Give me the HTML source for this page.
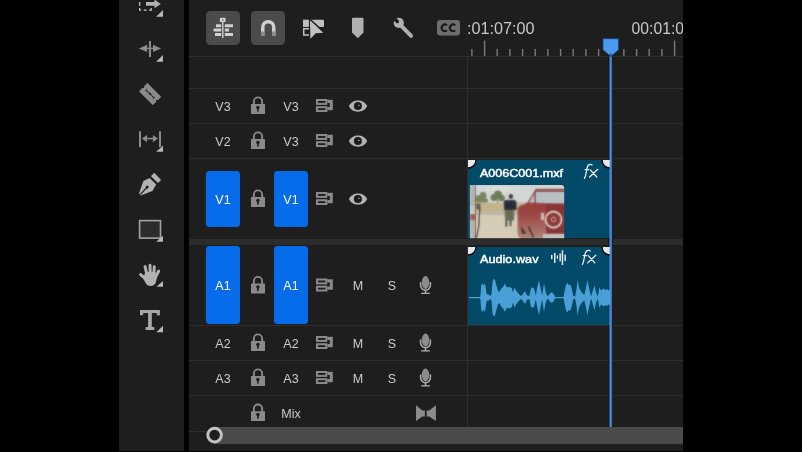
<!DOCTYPE html>
<html><head><meta charset="utf-8">
<style>
*{margin:0;padding:0;box-sizing:border-box}
html,body{width:802px;height:452px;overflow:hidden;background:#000;font-family:"Liberation Sans",sans-serif}
.a{position:absolute}
svg{position:absolute;left:0;top:0;will-change:transform}
text{font-family:"Liberation Sans",sans-serif}
</style></head><body>
<svg width="802" height="452" viewBox="0 0 802 452">
<defs>
  <linearGradient id="carg" x1="0" y1="204" x2="0" y2="238" gradientUnits="userSpaceOnUse"><stop offset="0" stop-color="#983e3c"/><stop offset="0.4" stop-color="#9e4c48"/><stop offset="1" stop-color="#ae8478"/></linearGradient>
  <linearGradient id="phg" x1="609.6" y1="0" x2="612" y2="0" gradientUnits="userSpaceOnUse"><stop offset="0" stop-color="#5aa0e8"/><stop offset="1" stop-color="#2a6cc0"/></linearGradient>
  <filter id="blur" x="-5%" y="-5%" width="110%" height="110%"><feGaussianBlur in="SourceGraphic" stdDeviation="0.8" result="b"/><feComposite in="SourceGraphic" in2="b" operator="arithmetic" k1="0" k2="0.45" k3="0.55" k4="0"/></filter>
  <clipPath id="tlc"><rect x="189" y="0" width="494" height="451"/></clipPath>
  <clipPath id="vclip"><rect x="468" y="160" width="142" height="78"/></clipPath>
  <clipPath id="aclip"><rect x="468" y="247" width="142" height="78"/></clipPath>
  <clipPath id="thumb"><path d="M469.9,185 H561.2 Q564.2,185 564.2,188 V238.2 H469.9 Z"/></clipPath>
  <pattern id="hatch" width="2.2" height="2.2" patternUnits="userSpaceOnUse" patternTransform="rotate(45)"><rect width="2.2" height="2.2" fill="#252525"/><rect width="1.1" height="2.2" fill="#323232"/></pattern>
  <g id="lock">
    <path d="M253.85,-0.5 V-4 A4.15,4.15 0 0 1 262.15,-4 V-0.5" fill="none" stroke="#8a8a8a" stroke-width="1.9"/>
    <rect x="251" y="-1.4" width="14" height="9.9" rx="0.6" fill="#8a8a8a"/>
    <circle cx="257.9" cy="1.9" r="1.7" fill="#1c1c1c"/>
    <rect x="257.1" y="2" width="1.6" height="4.1" fill="#1c1c1c"/>
  </g>
  <g id="sync">
    <rect x="317" y="-5.5" width="9.4" height="3.9" fill="none" stroke="#8a8a8a" stroke-width="2"/>
    <rect x="317" y="1.7" width="9.4" height="3.8" fill="none" stroke="#8a8a8a" stroke-width="2"/>
    <rect x="327.4" y="-5.7" width="5.4" height="10.4" fill="#8a8a8a"/>
    <rect x="327.3" y="-2.5" width="2.5" height="4" fill="#1c1c1c"/>
  </g>
  <g id="eye">
    <path d="M348.9,0.6 C352,-7 364,-7 367.2,0.6 C364,8.2 352,8.2 348.9,0.6 Z" fill="#b2b2b2"/>
    <circle cx="357.9" cy="0.5" r="4" fill="#1c1c1c"/>
    <rect x="358" y="-0.6" width="1.6" height="1" fill="#b2b2b2"/>
  </g>
  <g id="mic">
    <ellipse cx="425.5" cy="-2.5" rx="3.75" ry="6.5" fill="#8c8c8c"/>
    <path d="M420.6,-3 V0 A4.9,5.3 0 0 0 430.4,0 V-3" fill="none" stroke="#b0b0b0" stroke-width="1.5"/>
    <rect x="424.8" y="5" width="1.4" height="3.5" fill="#b0b0b0"/>
    <rect x="421.2" y="7.7" width="8.6" height="1.3" fill="#b0b0b0"/>
  </g>
  <g id="handle"><circle r="8" fill="#e6e8ec" stroke="#050505" stroke-width="1.4"/></g>
</defs>

<!-- left tools panel -->
<rect x="119" y="0" width="65" height="451" fill="#1e1e1e"/>
<!-- track select -->
<g fill="#c4c4c4">
  <rect x="139" y="2" width="1.3" height="3.8"/>
  <path d="M139,8 H140.3 V9.5 H141.2 V10.8 H139 Z"/>
  <rect x="143.7" y="9.5" width="2.9" height="1.3"/>
  <path d="M149,9.5 H150.6 V8 H151.9 V10.8 H149 Z"/>
</g>
<path d="M146,2 H154.5 V-0.5 L160.8,4 L154.5,8.2 V5.8 H146 Z" fill="#b4b4b4"/>
<path d="M156.1,16.8 H163 V10 Z" fill="#b8b8b8"/>
<!-- ripple -->
<g fill="#8c8c8c">
  <rect x="149" y="41" width="2" height="16"/>
  <path d="M138.8,48.4 L147.2,44.7 V52.1 Z"/>
  <path d="M161.1,48.4 L153,44.7 V52.1 Z"/>
  <rect x="146" y="47.7" width="8" height="1.4"/>
</g>
<path d="M156.1,61.7 H163 V54.9 Z" fill="#b8b8b8"/>
<!-- razor -->
<g transform="rotate(45 150.1 94.05)">
  <path d="M140.8,88.15 H159.4 Q159.9,88.15 159.9,88.65 V93 A1.05,1.05 0 0 0 159.9,95.1 V99.45 Q159.9,99.95 159.4,99.95 H140.8 Q140.3,99.95 140.3,99.45 V95.1 A1.05,1.05 0 0 0 140.3,93 V88.65 Q140.3,88.15 140.8,88.15 Z" fill="#8a8a8a"/>
  <rect x="144.5" y="93.6" width="11.2" height="0.9" fill="#1c1c1c"/>
  <path d="M143.8,92.3 L145.6,94.05 L143.8,95.8 L144.4,94.05 Z M156.4,92.3 L154.6,94.05 L156.4,95.8 L155.8,94.05 Z" fill="#1c1c1c"/>
  <path d="M150.1,92.7 L151.3,94.05 L150.1,95.4 L148.9,94.05 Z" fill="#1c1c1c"/>
</g>
<!-- slip -->
<g fill="#8c8c8c">
  <rect x="139" y="131.3" width="2" height="15.8"/>
  <rect x="159" y="131.3" width="2" height="15.8"/>
  <path d="M141.9,138.5 L147,135 V142.3 Z"/>
  <path d="M158,138.5 L152.9,135 V142.3 Z"/>
  <rect x="146" y="137.8" width="8" height="1.5"/>
</g>
<path d="M156.1,151.7 H163 V145.8 Z" fill="#b8b8b8"/>
<!-- pen -->
<g fill="#b2b2b2">
  <path d="M154.3,172.8 L161.1,179.9 L158,183.1 L150.9,176.2 Z"/>
  <path d="M149.6,177.9 L156.2,184.6 L152.4,191.1 L140.8,195.6 L139.1,193.2 L143.4,180.9 Z"/>
</g>
<path d="M140.5,194.4 L146.6,187.6" stroke="#1c1c1c" stroke-width="1.3"/>
<circle cx="147.1" cy="187.1" r="1.5" fill="#1c1c1c"/>
<!-- rectangle -->
<rect x="139.6" y="220.6" width="20.9" height="17.5" fill="url(#hatch)" stroke="#a4a4a4" stroke-width="1.6"/>
<path d="M156.1,241.7 H163 V235.8 Z" fill="#b8b8b8"/>
<!-- hand -->
<g stroke="#b2b2b2" stroke-width="3" stroke-linecap="round" fill="none">
  <path d="M140.6,274.6 L146.5,279.5"/>
  <path d="M145.1,266.6 L147,275"/>
  <path d="M150,265.3 L150.3,274"/>
  <path d="M154.3,266.7 L153.8,274"/>
  <path d="M158.7,271 L155.4,277.5"/>
</g>
<path d="M145.3,272 L155.3,272 L157,277 L156,282 Q154.5,286 150.8,286 Q147,286 145.6,283 L143.2,278.4 Z" fill="#b2b2b2"/>
<path d="M156.4,286.7 H163 V281.1 Z" fill="#b8b8b8"/>
<!-- type -->
<path d="M140,310 H159.9 V315.3 H156.8 V312.9 H151.8 V327 H154.3 V329.9 H145.6 V327 H148.1 V312.9 H143.2 V315.3 H140 Z" fill="#a8a8a8"/>
<path d="M156.3,332.3 H163 V325.8 Z" fill="#b8b8b8"/>

<!-- timeline panel -->
<g clip-path="url(#tlc)">
<rect x="189" y="0" width="494" height="451" fill="#1e1e1e"/>
<!-- toolbar -->
<rect x="206" y="11" width="34" height="34" rx="4.5" fill="#4b4b4b"/>
<rect x="251" y="11" width="34" height="34" rx="4.5" fill="#4b4b4b"/>
<g fill="#d2d2d2">
  <rect x="219.9" y="17.8" width="5.6" height="4.2"/><rect x="222" y="19.2" width="1.4" height="1.6" fill="#6a6a6a"/>
  <rect x="222.1" y="21.5" width="1.4" height="16.5"/>
  <rect x="216" y="24.3" width="5.2" height="2.9"/>
  <rect x="224.8" y="24.3" width="8.2" height="2.9"/>
  <path d="M214.3,28.5 H221.2 V31.5 H214.3 L213,30 Z"/>
  <rect x="224.8" y="28.5" width="4.2" height="3"/>
  <rect x="215" y="33" width="6.2" height="3"/>
  <rect x="224.8" y="33" width="8.2" height="3"/>
</g>
<path d="M262.75,35.5 V27.2 A5.5,5.5 0 0 1 273.75,27.2 V35.5" fill="none" stroke="#d0d0d0" stroke-width="3.5"/>
<rect x="261" y="31.5" width="3.5" height="4" fill="#8c8c8c"/>
<rect x="272" y="31.5" width="3.5" height="4" fill="#8c8c8c"/>
<!-- pointer icon -->
<g fill="#c0c0c0">
  <rect x="303" y="19.7" width="5.9" height="7.2"/>
  <path d="M310,19.7 H323 Q324,19.7 324,20.7 V25.9 Q324,26.9 323,26.9 H310 Z"/>
  <path d="M309,28.1 H303 V35.8 H309 V34.3 H304.5 V29.6 H309 Z"/>
</g>
<path d="M310.2,19.6 L320.6,29.2" stroke="#1e1e1e" stroke-width="1.6"/>
<path d="M310,20.6 L323.3,32.7 L315.8,33.3 L310.4,38.7 Z" fill="#c0c0c0"/>
<!-- marker -->
<path d="M352,18.8 Q352,17.8 353,17.8 H362.5 Q363.5,17.8 363.5,18.8 V32.5 L357.8,38.2 L352,32.5 Z" fill="#b0b0b0"/>
<!-- wrench -->
<path d="M401.3,25.8 L411.1,35.9" stroke="#b0b0b0" stroke-width="3.9" stroke-linecap="round"/>
<circle cx="398.8" cy="22.9" r="5.1" fill="#b0b0b0"/>
<path d="M392,16.1 L397.3,21.4" stroke="#1e1e1e" stroke-width="3.5" stroke-linecap="round"/>
<!-- CC -->
<rect x="437" y="20" width="23" height="15.5" rx="3.2" fill="#6e6e6e"/>
<path d="M446.9,25.4 A3,3.4 0 1 0 446.9,30.2 M455.1,25.4 A3,3.4 0 1 0 455.1,30.2" fill="none" stroke="#1c1c1c" stroke-width="2.3"/>
<!-- timecode -->
<text x="467" y="34" font-size="16" fill="#c8c8c8" textLength="67.5" lengthAdjust="spacingAndGlyphs">:01:07:00</text>
<text x="631.6" y="34" font-size="16" fill="#c8c8c8" textLength="83" lengthAdjust="spacingAndGlyphs">00:01:08:00</text>
<!-- ruler -->
<g fill="#7a7a7a"><rect x="471.2" y="49" width="1.4" height="7"/><rect x="483.9" y="40.5" width="1.4" height="15.5"/><rect x="496.5" y="49" width="1.4" height="7"/><rect x="509.2" y="49" width="1.4" height="7"/><rect x="521.9" y="49" width="1.4" height="7"/><rect x="534.5" y="49" width="1.4" height="7"/><rect x="547.2" y="49" width="1.4" height="7"/><rect x="559.9" y="49" width="1.4" height="7"/><rect x="572.5" y="49" width="1.4" height="7"/><rect x="585.2" y="49" width="1.4" height="7"/><rect x="597.9" y="49" width="1.4" height="7"/><rect x="610.5" y="49" width="1.4" height="7"/><rect x="623.2" y="49" width="1.4" height="7"/><rect x="635.9" y="49" width="1.4" height="7"/><rect x="648.5" y="49" width="1.4" height="7"/><rect x="661.2" y="49" width="1.4" height="7"/><rect x="673.9" y="40.5" width="1.4" height="15.5"/></g>
<!-- grid lines -->
<g fill="#2e2e2e">
  <rect x="189" y="56" width="494" height="1"/>
  <rect x="189" y="88" width="494" height="1"/>
  <rect x="189" y="123" width="494" height="1"/>
  <rect x="189" y="158" width="494" height="1"/>
  <rect x="189" y="325" width="494" height="1"/>
  <rect x="189" y="360" width="494" height="1"/>
  <rect x="189" y="395" width="494" height="1"/>
  <rect x="189" y="431" width="18" height="1"/>
  <rect x="467" y="57" width="1" height="370"/>
</g>
<rect x="189" y="239" width="494" height="6" fill="#2c2c2c"/>

<!-- track headers -->
<g font-size="12.5" fill="#cccccc" text-anchor="middle">
  <text x="223" y="111">V3</text><text x="291" y="111">V3</text>
  <text x="223" y="146">V2</text><text x="291" y="146">V3</text>
  <text x="223" y="348">A2</text><text x="291" y="348">A2</text>
  <text x="223" y="383">A3</text><text x="291" y="383">A3</text>
  <text x="291" y="418">Mix</text>
  <text x="358" y="290">M</text><text x="392" y="290">S</text>
  <text x="358" y="348">M</text><text x="392" y="348">S</text>
  <text x="358" y="383">M</text><text x="392" y="383">S</text>
</g>
<rect x="206" y="171" width="34" height="56" rx="3.5" fill="#076cea"/>
<rect x="274" y="171" width="34" height="56" rx="3.5" fill="#076cea"/>
<rect x="206" y="246" width="34" height="78" rx="3.5" fill="#076cea"/>
<rect x="274" y="246" width="34" height="78" rx="3.5" fill="#076cea"/>
<g font-size="12.5" fill="#ffffff" text-anchor="middle">
  <text x="223" y="204">V1</text><text x="291" y="204">V1</text>
  <text x="223" y="290">A1</text><text x="291" y="290">A1</text>
</g>
<use href="#lock" transform="translate(0 105.5)"/>
<use href="#lock" transform="translate(0 140.5)"/>
<use href="#lock" transform="translate(0 198.5)"/>
<use href="#lock" transform="translate(0 285)"/>
<use href="#lock" transform="translate(0 342.5)"/>
<use href="#lock" transform="translate(0 377.5)"/>
<use href="#lock" transform="translate(0 412.6)"/>
<use href="#sync" transform="translate(0 105.5)"/>
<use href="#sync" transform="translate(0 140.5)"/>
<use href="#sync" transform="translate(0 198.5)"/>
<use href="#sync" transform="translate(0 285)"/>
<use href="#sync" transform="translate(0 342.5)"/>
<use href="#sync" transform="translate(0 377.5)"/>
<use href="#eye" transform="translate(0 105.5)"/>
<use href="#eye" transform="translate(0 140.5)"/>
<use href="#eye" transform="translate(0 198.5)"/>
<use href="#mic" transform="translate(0 285)"/>
<use href="#mic" transform="translate(0 342.5)"/>
<use href="#mic" transform="translate(0 377.5)"/>
<path d="M416,405.2 L422.4,410.6 H424.9 V416.4 H422.4 L416,421 Z M435.9,405.2 L429.2,410.6 H426.7 V416.4 H429.2 L435.9,421 Z" fill="#8c8c8c"/>

<rect x="608" y="50" width="1.6" height="377" fill="#171b22"/><rect x="612" y="50" width="1.4" height="377" fill="#251f1c"/>
<!-- video clip -->
<rect x="468" y="160" width="142" height="78" fill="#024a67"/>
<g clip-path="url(#thumb)"><g filter="url(#blur)">
  <rect x="468" y="184" width="98" height="56" fill="#d2cbb8"/>
  <rect x="468" y="184" width="98" height="20" fill="#d3d6d6"/>
  <ellipse cx="500" cy="189" rx="14" ry="3" fill="#dcdcd8"/>
  <g fill="#78865e"><ellipse cx="479" cy="199" rx="3.6" ry="4"/><ellipse cx="483" cy="196" rx="3.4" ry="4.2"/><ellipse cx="485" cy="200.5" rx="3" ry="2.6"/><rect x="481.5" y="200" width="1" height="4"/></g>
  <g fill="#6a7c52"><ellipse cx="494" cy="197.5" rx="3.5" ry="3.6"/><ellipse cx="498" cy="194.5" rx="4" ry="4"/><ellipse cx="501.5" cy="198" rx="3.4" ry="3.2"/><rect x="497" y="199" width="1.2" height="4"/></g>
  <rect x="468" y="202.5" width="98" height="9.5" fill="#c3b38f"/>
  <rect x="468" y="212" width="98" height="3" fill="#bdb6a8"/>
  <rect x="468" y="215" width="98" height="25" fill="#d6cbb6"/>
  <rect x="469.9" y="185" width="5.2" height="54" fill="#b6b2ae"/>
  <rect x="469.9" y="206" width="5.2" height="8" fill="#c8c6c2"/>
  <rect x="469.9" y="214" width="5.2" height="6.2" fill="#a85a58"/>
  <rect x="475" y="185" width="0.9" height="54" fill="#5a5552"/>
  <rect x="476.5" y="203.5" width="4" height="6" fill="#5e5a56"/>
  <path d="M479.8,208.5 L478.8,226 L476.4,238" stroke="#2a2624" stroke-width="1.2" fill="none"/>
  <circle cx="510.9" cy="196.4" r="2.3" fill="#2e2a26"/>
  <path d="M503.6,201.5 Q504,200 507,199.8 H514 Q516.5,200 516.6,202 L516.8,210 H504 Z" fill="#262c38"/>
  <path d="M504.5,210 H514.5 L514,220.5 H505 Z" fill="#6c6a52"/>
  <rect x="505.2" y="220" width="2.2" height="7" fill="#57574a"/>
  <rect x="509.4" y="220" width="2.2" height="6.2" fill="#57574a"/>
  <path d="M517.5,210 Q517.5,205 524,204.5 L527.6,202 L535.8,188.7 H566 V240 H522 Q517.5,238 517.5,232 Z" fill="url(#carg)"/>
  <path d="M529,202.5 L536.6,190.3 H566 V203.5 Z" fill="#b8c0c4"/>
  <path d="M536.6,190.3 H566 V192 H536 Z" fill="#8e4444"/>
  <rect x="534.3" y="190.5" width="1.6" height="13" fill="#8e4444"/>
  <rect x="546" y="203.8" width="20" height="30.5" fill="#8c3030"/>
  <circle cx="553.5" cy="219.6" r="8" fill="none" stroke="#ddd4ce" stroke-width="1.6"/>
  <circle cx="553.5" cy="219.6" r="2.4" fill="none" stroke="#c2aaa2" stroke-width="1"/>
  <path d="M520.7,225.8 L526.5,233.5 L522,234 Z" fill="#3a3030"/>
  <path d="M528.4,226.5 L533.5,237.3" stroke="#3a2626" stroke-width="1.6"/>
  <rect x="543" y="234" width="23" height="5" fill="#c4c0bc"/>
  <rect x="541" y="213" width="3" height="7" fill="#c9b8b0"/>
</g></g>
<text x="480" y="177.3" font-size="11.8" fill="#ffffff" stroke="#ffffff" stroke-width="0.45" textLength="83"  lengthAdjust="spacingAndGlyphs">A006C001.mxf</text>
<g id="fxv" stroke="#eef2f4" stroke-width="1.25" fill="none" stroke-linecap="round">
  <path d="M584.4,178.4 Q585.6,176.5 586.2,172.5 L587.2,167.4 Q588,164.4 590.4,164.4 Q591.6,164.4 592.2,164.9"/>
  <path d="M585.2,169.7 H588.7"/>
  <path d="M590.3,169.8 L596.8,177 M597.8,169.3 L589.6,177"/>
</g>
<g clip-path="url(#vclip)">
  <use href="#handle" transform="translate(468 160)"/>
  <use href="#handle" transform="translate(610 160)"/>
</g>

<!-- audio clip -->
<rect x="468" y="247" width="142" height="78" fill="#024a67"/>
<path d="M469.0,297.0 L479.9,297.0 L480.4,295.6 L481.3,284.8 L482.3,283.3 L483.3,285.7 L485.0,283.3 L485.7,287.6 L486.5,293.6 L487.5,294.6 L488.6,294.5 L489.6,295.6 L490.6,296.1 L491.6,293.6 L492.5,281.8 L494.0,278.4 L495.0,279.9 L496.4,285.2 L497.9,290.6 L499.3,292.1 L501.3,288.6 L503.2,286.7 L505.0,283.3 L506.2,286.7 L508.1,287.2 L510.0,286.9 L512.0,288.4 L512.9,292.6 L514.4,287.6 L515.8,290.1 L518.3,293.6 L520.7,296.1 L522.6,294.6 L525.1,291.1 L526.5,294.6 L528.0,296.1 L529.5,295.6 L530.9,288.6 L532.9,287.2 L534.3,289.1 L535.8,295.6 L537.2,287.6 L539.0,279.9 L540.3,286.7 L542.1,295.6 L544.0,283.3 L545.5,291.6 L546.9,295.6 L548.4,296.1 L549.8,293.6 L551.8,292.3 L553.7,294.0 L554.9,296.6 L555.5,297.0 L563.5,297.0 L564.4,292.6 L565.9,285.2 L567.2,282.8 L568.8,285.2 L570.1,284.3 L571.7,288.6 L573.2,295.9 L575.1,296.6 L576.6,288.6 L577.6,279.4 L579.0,287.6 L579.5,288.6 L581.9,292.6 L584.3,295.0 L585.8,288.6 L587.4,279.9 L588.9,287.6 L591.1,296.6 L592.6,291.6 L594.5,285.2 L596.0,292.6 L597.9,296.4 L599.4,287.2 L600.9,290.6 L602.3,289.6 L603.8,288.6 L605.2,290.1 L606.7,289.1 L608.6,290.6 L610.5,290.1 L610.5,305.1 L608.6,304.6 L606.7,306.1 L605.2,305.1 L603.8,306.6 L602.3,305.6 L600.9,304.6 L599.4,308.0 L597.9,298.8 L596.0,302.6 L594.5,310.0 L592.6,303.6 L591.1,298.6 L588.9,307.6 L587.4,315.3 L585.8,306.6 L584.3,300.2 L581.9,302.6 L579.5,306.6 L579.0,307.6 L577.6,315.8 L576.6,306.6 L575.1,298.6 L573.2,299.3 L571.7,306.6 L570.1,310.9 L568.8,310.0 L567.2,312.4 L565.9,310.0 L564.4,302.6 L563.5,298.2 L555.5,298.2 L554.9,298.6 L553.7,301.2 L551.8,302.9 L549.8,301.6 L548.4,299.1 L546.9,299.6 L545.5,303.6 L544.0,311.9 L542.1,299.6 L540.3,308.5 L539.0,315.3 L537.2,307.6 L535.8,299.6 L534.3,306.1 L532.9,308.0 L530.9,306.6 L529.5,299.6 L528.0,299.1 L526.5,300.6 L525.1,304.1 L522.6,300.6 L520.7,299.1 L518.3,301.6 L515.8,305.1 L514.4,307.6 L512.9,302.6 L512.0,306.8 L510.0,308.3 L508.1,308.0 L506.2,308.5 L505.0,311.9 L503.2,308.5 L501.3,306.6 L499.3,303.1 L497.9,304.6 L496.4,310.0 L495.0,315.3 L494.0,316.8 L492.5,313.4 L491.6,301.6 L490.6,299.1 L489.6,299.6 L488.6,300.7 L487.5,300.6 L486.5,301.6 L485.7,307.6 L485.0,311.9 L483.3,309.5 L482.3,311.9 L481.3,310.4 L480.4,299.6 L479.9,298.2 L469.0,298.2Z" fill="#4a9fd6"/>
<text x="480" y="263.2" font-size="11.8" fill="#ffffff" stroke="#ffffff" stroke-width="0.45" textLength="58.5"  lengthAdjust="spacingAndGlyphs">Audio.wav</text>
<g fill="#dde9f0">
  <rect x="551" y="254.9" width="1.5" height="4.3"/>
  <rect x="554" y="252.9" width="1.5" height="10.1"/>
  <rect x="556.7" y="255.4" width="1.3" height="3.4"/>
  <rect x="559.4" y="253.4" width="1.5" height="7.9"/>
  <rect x="561.7" y="250.2" width="1.5" height="14.8"/>
  <rect x="564.4" y="254.6" width="1.5" height="6.3"/>
</g>
<use href="#fxv" transform="translate(-2 85.9)"/>
<g clip-path="url(#aclip)">
  <use href="#handle" transform="translate(468 247)"/>
  <use href="#handle" transform="translate(610 247)"/>
</g>

<!-- playhead -->
<rect x="609.6" y="50" width="2.4" height="377" fill="url(#phg)"/>
<path d="M602.9,38.6 H618.7 V49.9 L610.8,56.4 L602.9,49.9 Z" fill="#4b98ee" stroke="#0f3a6c" stroke-width="0.9"/><rect x="610.3" y="53.5" width="1" height="3" fill="#0f3a6c"/>

<!-- scrollbar -->
<rect x="214" y="427" width="469" height="17" fill="#4a4a4a"/>
<circle cx="214.6" cy="435.1" r="6.8" fill="#1e1e1e" stroke="#c2c2c2" stroke-width="3"/>
</g>
</svg>
</body></html>
